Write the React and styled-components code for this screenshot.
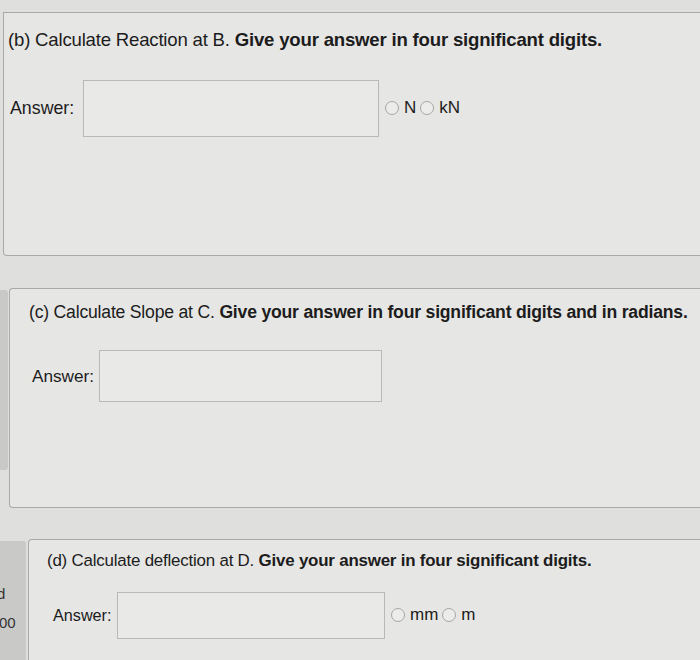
import React from "react";
import styled, { createGlobalStyle } from "styled-components";

const Global = createGlobalStyle`
  html, body {
    margin: 0;
    padding: 0;
    background: #e0e0de;
    font-family: "Liberation Sans", Arial, sans-serif;
    color: #1c1c1c;
  }
`;

const Page = styled.div`
  width: 700px;
  height: 660px;
  overflow: hidden;
  display: flex;
  flex-direction: column;
  background: #dfdfdd;
`;

const Row = styled.div`
  display: flex;
  align-items: flex-start;
  margin-top: ${(p) => p.top}px;
`;

const Side = styled.div`
  width: ${(p) => p.w}px;
  height: ${(p) => p.h}px;
  margin-top: 2px;
  flex-shrink: 0;
  background: #c9c9c7;
  border-radius: 0 3px 3px 0;
  position: relative;
  overflow: hidden;
  font-size: 15px;
  color: #333;
`;

const SideText = styled.span`
  position: absolute;
  left: ${(p) => p.x}px;
  top: ${(p) => p.y}px;
`;

const Card = styled.div`
  flex: 1;
  height: ${(p) => p.h}px;
  margin-left: ${(p) => p.gap}px;
  background: #e6e6e4;
  border: 1px solid #a9a9a7;
  border-right: none;
  border-radius: ${(p) => (p.flatTop ? "0 0 0 4px" : "4px 0 0 4px")};
  box-sizing: border-box;
  padding: ${(p) => p.pad};
`;

const Title = styled.div`
  font-size: ${(p) => p.size}px;
  line-height: 20px;
  letter-spacing: -0.2px;
  white-space: nowrap;
  b {
    font-weight: 700;
  }
`;

const AnswerRow = styled.div`
  display: flex;
  align-items: center;
  margin-top: ${(p) => p.mt}px;
`;

const Label = styled.span`
  font-size: ${(p) => p.size}px;
  width: ${(p) => p.w}px;
  padding-left: ${(p) => p.indent || 0}px;
  flex-shrink: 0;
`;

const Input = styled.div`
  width: ${(p) => p.w}px;
  height: ${(p) => p.h}px;
  box-sizing: border-box;
  border: 1px solid #b9b9b7;
  background: #e9e9e7;
`;

const Units = styled.div`
  display: flex;
  align-items: center;
  align-self: flex-start;
  margin-top: ${(p) => p.mt}px;
  margin-left: 6px;
  font-size: 17px;
`;

const Radio = styled.span`
  display: inline-block;
  width: 12px;
  height: 12px;
  border-radius: 50%;
  border: 1px solid #a6a6a4;
  background: #ececea;
  margin-right: 5px;
  margin-left: ${(p) => p.ml || 0}px;
`;

export default function App() {
  return (
    <Page>
      <Global />
      <Row top={12}>
        <Card h={244} gap={3} pad="17px 0 0 4px" flatTop>
          <Title size={18.6}>
            (b) Calculate Reaction at B. <b>Give your answer in four significant digits.</b>
          </Title>
          <AnswerRow mt={30}>
            <Label size={17.8} w={73} indent={2}>Answer:</Label>
            <Input w={296} h={57} />
            <Units mt={18}>
              <Radio />N<Radio ml={4} />kN
            </Units>
          </AnswerRow>
        </Card>
      </Row>
      <Row top={32}>
        <Side w={8} h={180} />
        <Card h={220} gap={1} pad="13px 0 0 19px">
          <Title size={17.6}>
            (c) Calculate Slope at C. <b>Give your answer in four significant digits and in radians.</b>
          </Title>
          <AnswerRow mt={28}>
            <Label size={17.2} w={67} indent={3}>Answer:</Label>
            <Input w={283} h={52} />
          </AnswerRow>
        </Card>
      </Row>
      <Row top={31}>
        <Side w={26} h={130}>
          <SideText x={-3} y={44}>d</SideText>
          <SideText x={-1} y={73}>00</SideText>
        </Side>
        <Card h={125} gap={2} pad="11px 0 0 18px">
          <Title size={16.9}>
            (d) Calculate deflection at D. <b>Give your answer in four significant digits.</b>
          </Title>
          <AnswerRow mt={21}>
            <Label size={16.2} w={64} indent={6}>Answer:</Label>
            <Input w={268} h={47} />
            <Units mt={13}>
              <Radio />mm<Radio ml={4} />m
            </Units>
          </AnswerRow>
        </Card>
      </Row>
    </Page>
  );
}
